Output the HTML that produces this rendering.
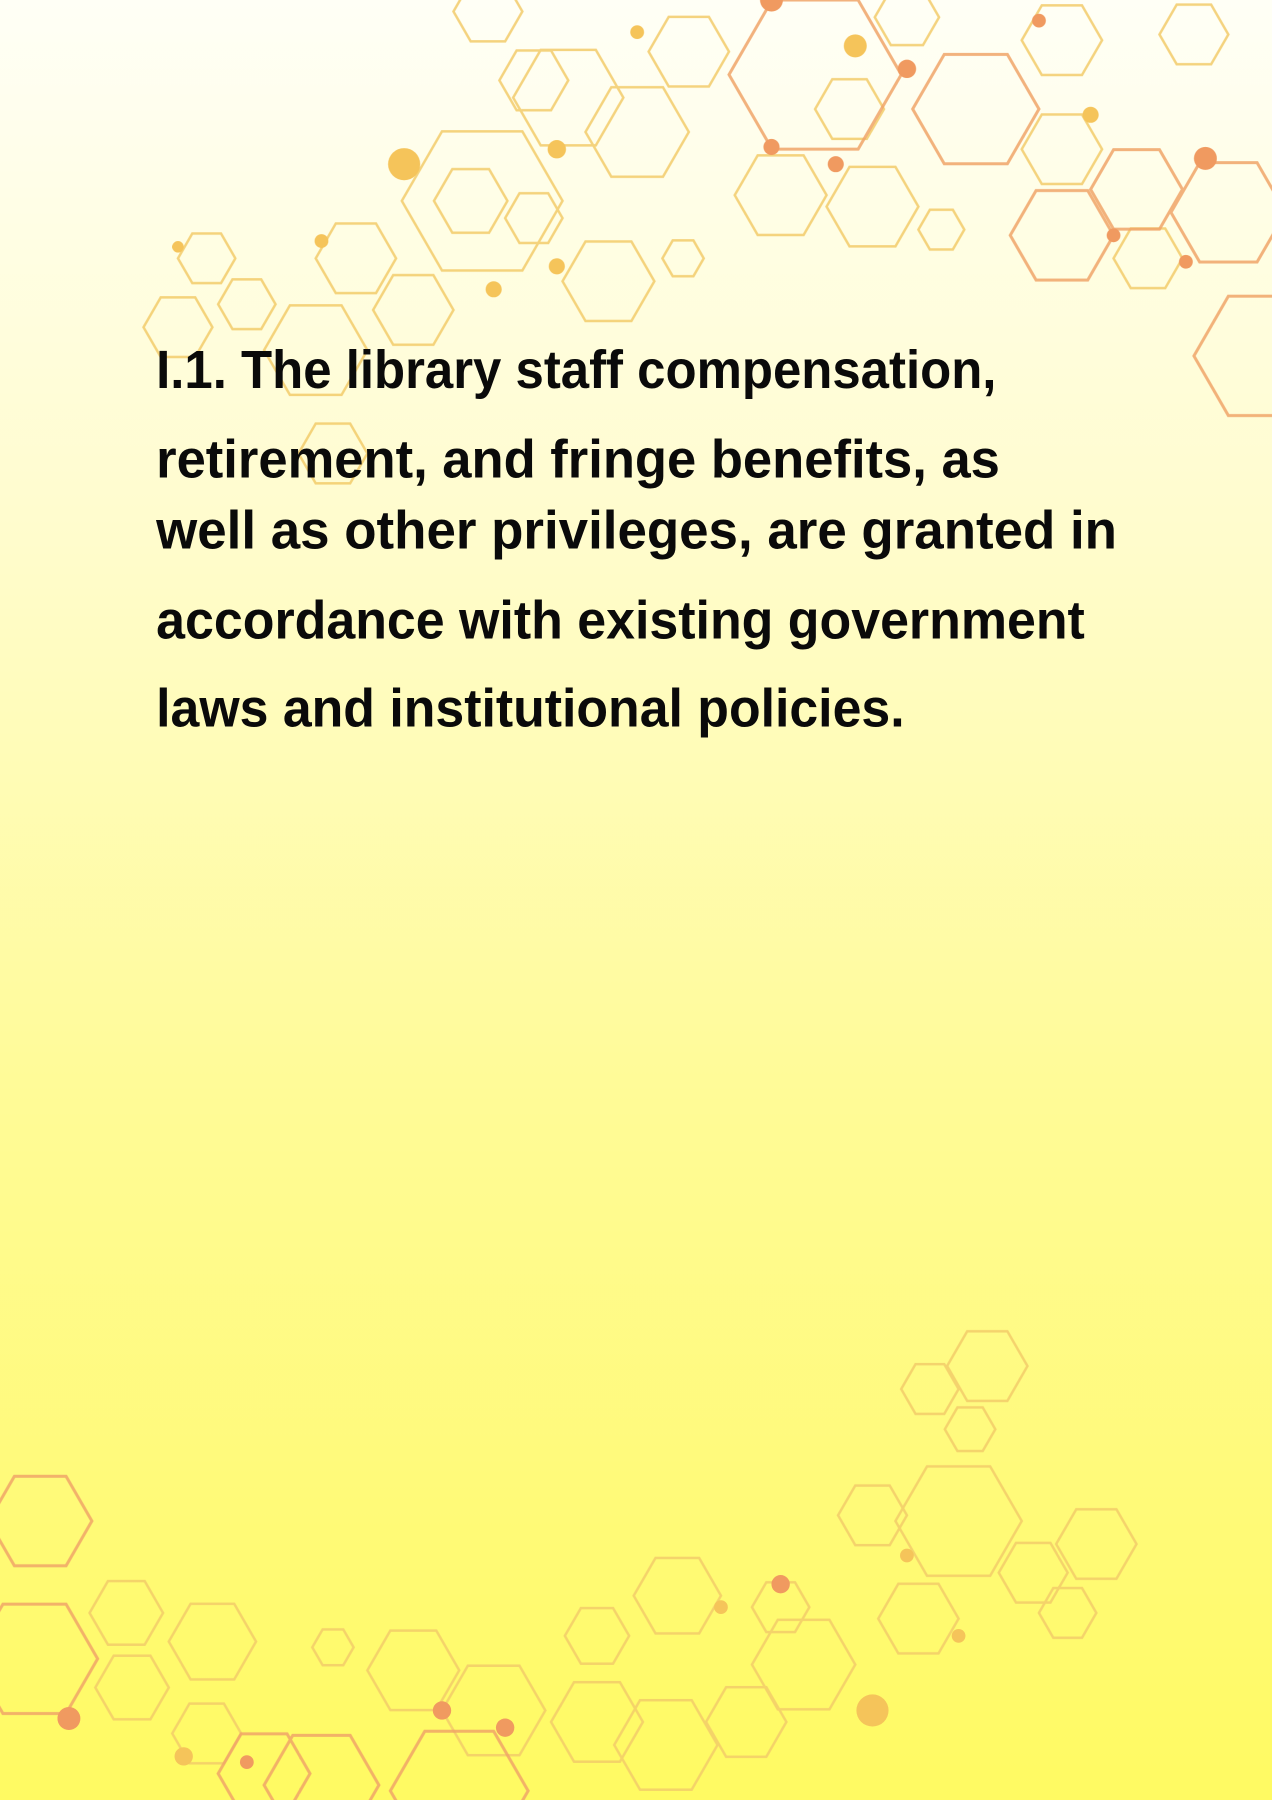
<!DOCTYPE html>
<html><head><meta charset="utf-8"><style>
html,body{margin:0;padding:0}
body{width:1272px;height:1800px;overflow:hidden;background:linear-gradient(180deg,#fffff6 0%,#fffccc 30%,#fffb98 60%,#fffa62 100%)}
svg{display:block}
</style></head><body>
<svg width="1272" height="1800" viewBox="0 0 1108 1568" xmlns="http://www.w3.org/2000/svg">
<defs><polygon id="h" points="1,0 .5,.866 -.5,.866 -1,0 -.5,-.866 .5,-.866" fill="none" vector-effect="non-scaling-stroke"/></defs>
<g stroke="#f3cb6a" stroke-width="2.5" opacity="0.85">
<use href="#h" transform="translate(420,175) scale(70)"/>
<use href="#h" transform="translate(410,175) scale(32)"/>
<use href="#h" transform="translate(495,85) scale(48)"/>
<use href="#h" transform="translate(555,115) scale(45)"/>
<use href="#h" transform="translate(600,45) scale(35)"/>
<use href="#h" transform="translate(740,95) scale(30)"/>
<use href="#h" transform="translate(790,15) scale(28)"/>
<use href="#h" transform="translate(925,35) scale(35)"/>
<use href="#h" transform="translate(925,130) scale(35)"/>
<use href="#h" transform="translate(1000,225) scale(30)"/>
<use href="#h" transform="translate(760,180) scale(40)"/>
<use href="#h" transform="translate(680,170) scale(40)"/>
<use href="#h" transform="translate(530,245) scale(40)"/>
<use href="#h" transform="translate(465,190) scale(25)"/>
<use href="#h" transform="translate(180,225) scale(25)"/>
<use href="#h" transform="translate(215,265) scale(25)"/>
<use href="#h" transform="translate(155,285) scale(30)"/>
<use href="#h" transform="translate(275,305) scale(45)"/>
<use href="#h" transform="translate(310,225) scale(35)"/>
<use href="#h" transform="translate(360,270) scale(35)"/>
<use href="#h" transform="translate(595,225) scale(18)"/>
<use href="#h" transform="translate(820,200) scale(20)"/>
<use href="#h" transform="translate(1040,30) scale(30)"/>
<use href="#h" transform="translate(465,70) scale(30)"/>
<use href="#h" transform="translate(425,10) scale(30)"/>
<use href="#h" transform="translate(290,395) scale(30)"/>
</g>
<g stroke="#f0a468" stroke-width="3" opacity="0.85">
<use href="#h" transform="translate(710,65) scale(75)"/>
<use href="#h" transform="translate(850,95) scale(55)"/>
<use href="#h" transform="translate(990,165) scale(40)"/>
<use href="#h" transform="translate(1070,185) scale(50)"/>
<use href="#h" transform="translate(1100,310) scale(60)"/>
<use href="#h" transform="translate(925,205) scale(45)"/>
</g>
<g fill="#f5c45a">
<circle cx="352" cy="143" r="14"/><circle cx="745" cy="40" r="10"/><circle cx="485" cy="130" r="8"/><circle cx="430" cy="252" r="7"/><circle cx="485" cy="232" r="7"/><circle cx="280" cy="210" r="6"/><circle cx="155" cy="215" r="5"/><circle cx="555" cy="28" r="6"/><circle cx="950" cy="100" r="7"/>
</g>
<g fill="#f09a60">
<circle cx="790" cy="60" r="8"/><circle cx="672" cy="0" r="10"/><circle cx="1050" cy="138" r="10"/><circle cx="672" cy="128" r="7"/><circle cx="728" cy="143" r="7"/><circle cx="970" cy="205" r="6"/><circle cx="1033" cy="228" r="6"/><circle cx="905" cy="18" r="6"/>
</g>
<g stroke="#f3cb6a" stroke-width="2.5" opacity="0.85">
<use href="#h" transform="translate(110,1405) scale(32)"/>
<use href="#h" transform="translate(185,1430) scale(38)"/>
<use href="#h" transform="translate(115,1470) scale(32)"/>
<use href="#h" transform="translate(180,1510) scale(30)"/>
<use href="#h" transform="translate(360,1455) scale(40)"/>
<use href="#h" transform="translate(430,1490) scale(45)"/>
<use href="#h" transform="translate(520,1425) scale(28)"/>
<use href="#h" transform="translate(590,1390) scale(38)"/>
<use href="#h" transform="translate(700,1450) scale(45)"/>
<use href="#h" transform="translate(680,1400) scale(25)"/>
<use href="#h" transform="translate(760,1320) scale(30)"/>
<use href="#h" transform="translate(835,1325) scale(55)"/>
<use href="#h" transform="translate(860,1190) scale(35)"/>
<use href="#h" transform="translate(810,1210) scale(25)"/>
<use href="#h" transform="translate(845,1245) scale(22)"/>
<use href="#h" transform="translate(800,1410) scale(35)"/>
<use href="#h" transform="translate(900,1370) scale(30)"/>
<use href="#h" transform="translate(955,1345) scale(35)"/>
<use href="#h" transform="translate(930,1405) scale(25)"/>
<use href="#h" transform="translate(290,1435) scale(18)"/>
<use href="#h" transform="translate(520,1500) scale(40)"/>
<use href="#h" transform="translate(580,1520) scale(45)"/>
<use href="#h" transform="translate(650,1500) scale(35)"/>
</g>
<g stroke="#f0a468" stroke-width="3" opacity="0.85">
<use href="#h" transform="translate(35,1325) scale(45)"/>
<use href="#h" transform="translate(30,1445) scale(55)"/>
<use href="#h" transform="translate(230,1545) scale(40)"/>
<use href="#h" transform="translate(400,1560) scale(60)"/>
<use href="#h" transform="translate(280,1555) scale(50)"/>
</g>
<g fill="#f5c45a"><circle cx="760" cy="1490" r="14"/><circle cx="160" cy="1530" r="8"/><circle cx="835" cy="1425" r="6"/><circle cx="790" cy="1355" r="6"/><circle cx="628" cy="1400" r="6"/></g>
<g fill="#f09a60"><circle cx="60" cy="1497" r="10"/><circle cx="385" cy="1490" r="8"/><circle cx="440" cy="1505" r="8"/><circle cx="680" cy="1380" r="8"/><circle cx="215" cy="1535" r="6"/></g>
<g font-family="'Liberation Sans',sans-serif" font-size="47" font-weight="bold" fill="#0a0a0a">
<text x="136" y="338" textLength="732" lengthAdjust="spacingAndGlyphs">I.1. The library staff compensation,</text>
<text x="136" y="416" textLength="735" lengthAdjust="spacingAndGlyphs">retirement, and fringe benefits, as</text>
<text x="136" y="478" textLength="837" lengthAdjust="spacingAndGlyphs">well as other privileges, are granted in</text>
<text x="136" y="556" textLength="809" lengthAdjust="spacingAndGlyphs">accordance with existing government</text>
<text x="136" y="633" textLength="652" lengthAdjust="spacingAndGlyphs">laws and institutional policies.</text>
</g>
</svg>
</body></html>
